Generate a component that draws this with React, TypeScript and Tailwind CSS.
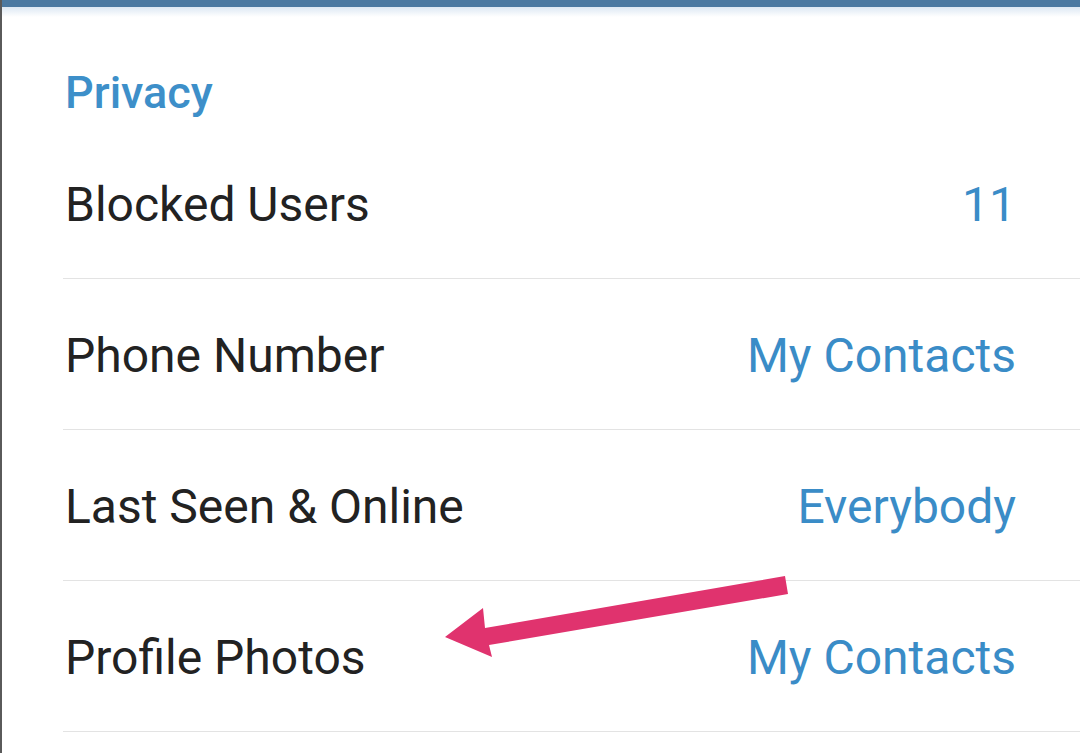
import React from "react";

const rows = [
  { label: "Blocked Users", value: "11" },
  { label: "Phone Number", value: "My Contacts" },
  { label: "Last Seen & Online", value: "Everybody" },
  { label: "Profile Photos", value: "My Contacts" },
];

export default function App() {
  return (
    <div
      className="relative w-[1080px] h-[753px] overflow-hidden bg-white"
      style={{ fontFamily: "Roboto, 'Noto Sans', sans-serif" }}
    >
      <div className="h-[7px] bg-[#4b79a1]" />
      <div className="absolute left-0 right-0 top-[7px] h-[10px] bg-gradient-to-b from-[#dde8f3] to-white" />
      <div className="absolute left-0 top-0 bottom-0 w-[2px] bg-[#5a5a5a]" />
      <div className="h-[121px] pl-[65px] flex items-center">
        <span className="text-[45px] font-medium text-[#3d8fc9] leading-none mt-[49px]">Privacy</span>
      </div>
      <div className="pl-[63px]">
        {rows.map((r) => (
          <div key={r.label} className="h-[151px] pt-[3px] border-b border-[#e3e3e3] flex items-center justify-between pr-[64px]">
            <span className="pl-[2px] text-[48px] text-[#222222] leading-none">{r.label}</span>
            <span className="text-[48px] text-[#3a8cc7] leading-none">{r.value}</span>
          </div>
        ))}
      </div>
      <svg className="absolute left-0 top-0" width="1080" height="753" viewBox="0 0 1080 753">
        <polygon
          points="785,576 788,594 489,645 492,657 445,637 483,608 485,628"
          fill="#e0336e"
        />
      </svg>
    </div>
  );
}
